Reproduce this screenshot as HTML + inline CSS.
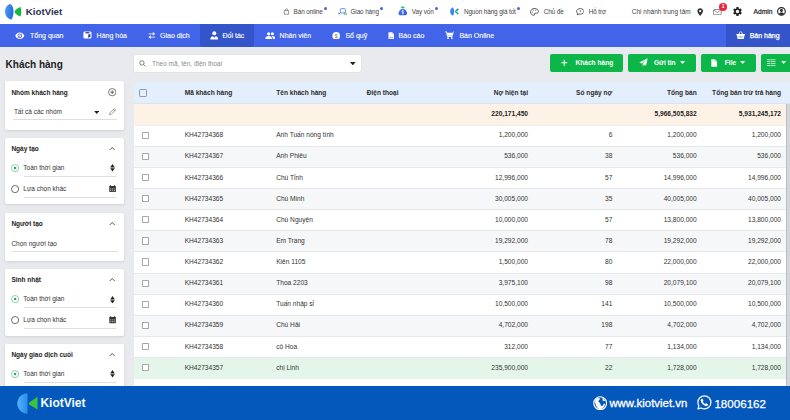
<!DOCTYPE html>
<html><head><meta charset="utf-8">
<style>
*{margin:0;padding:0;box-sizing:border-box}
html,body{width:790px;height:420px;overflow:hidden;background:#e9eaee;font-family:"Liberation Sans",sans-serif;color:#222}
.abs,.bx,.t{position:absolute}
.t{white-space:nowrap}
.r{text-align:right}
.th{font-size:6.6px;font-weight:bold;color:#2b2b2b}
.tb{font-size:6.6px;font-weight:bold;color:#222}
.td{font-size:6.6px;color:#333}
.cb{position:absolute;width:7.4px;height:7.2px;border:0.9px solid #8e939b;border-radius:1.2px;background:transparent}
#top{position:absolute;left:0;top:0;width:790px;height:24px;background:#fff}
#nav{position:absolute;left:0;top:24px;width:790px;height:22.5px;background:#4264e8}
.nt{position:absolute;top:0.8px;height:22.5px;line-height:22.5px;color:#fff;font-size:7px;white-space:nowrap;-webkit-text-stroke:0.12px #fff}
.tt{position:absolute;top:1px;height:24px;line-height:22.6px;font-size:6.4px;letter-spacing:-0.12px;color:#444;white-space:nowrap}
.dot{position:absolute;width:3px;height:3px;border-radius:50%;background:#4a62e0}
.panel{position:absolute;left:5px;width:118.5px;background:#fff;border-radius:2px;box-shadow:0 1px 3px rgba(0,0,0,.11)}
.ph{position:absolute;left:11.4px;font-size:6.5px;font-weight:bold;color:#222;white-space:nowrap}
.pt{position:absolute;font-size:6.5px;color:#333;white-space:nowrap}
.ul{position:absolute;height:0.7px;background:#dedede}
.radio{position:absolute;width:8px;height:8px;border-radius:50%;border:0.8px solid #555}
.radio.on{border-color:#1fae5a}
.radio.on:after{content:"";position:absolute;left:2.2px;top:2.2px;width:2.4px;height:2.4px;border-radius:50%;background:#1fae5a}
.chev{position:absolute;width:4px;height:4px;border-left:0.9px solid #333;border-top:0.9px solid #333;transform:rotate(45deg)}
.btn{position:absolute;top:54.1px;height:17.6px;background:#0db649;border-radius:2px;color:#fff;font-size:6.6px;font-weight:bold}
.btn span{position:absolute;top:0;line-height:17.6px;white-space:nowrap}
#foot{position:absolute;left:0;top:386.3px;width:790px;height:34px;background:#0558bb}

</style></head><body>
<div id="top">
  <svg class="abs" style="left:4px;top:3px" width="18" height="17" viewBox="0 0 18 17">
    <defs><linearGradient id="lg1" x1="0" y1="0" x2="1" y2="0.3"><stop offset="0" stop-color="#4aa2f6"/><stop offset="1" stop-color="#2a6ce0"/></linearGradient></defs>
    <path d="M6.5 1 C3 1.5 1 5 1 8.5 C1 12.5 3.5 16 7.5 16.5 C9 14 9.5 11 9.5 8.5 C9.5 5.5 8.8 2.8 6.5 1 Z" fill="url(#lg1)"/>
    <path d="M16.6 3.9 C13.8 5 11.8 6.3 11 7.4 C10.5 8.2 10.5 9.2 11 10 C11.8 11.1 13.8 12.5 16.4 13.6 C17 11.5 17.3 10 17.3 8.7 C17.3 7.2 17.1 5.6 16.6 3.9 Z" fill="#14ba3c"/>
  </svg>
  <div class="abs" style="left:25.8px;top:3.8px;height:16px;line-height:16px;font-size:9.7px;font-weight:bold;color:#2a3255">KiotViet</div>

  <!-- bag -->
  <svg class="abs" style="left:282.5px;top:7.9px" width="7" height="7" viewBox="0 0 14 14" fill="none" stroke="#777" stroke-width="1.5">
    <path d="M2.5 5.2 H11.5 L11 12.5 H3 Z" stroke-linejoin="round"/><path d="M4.8 5.2 V3.8 A2.2 2.2 0 0 1 9.2 3.8 V5.2"/>
  </svg>
  <div class="tt" style="left:293.6px">Bán online</div><div class="dot" style="left:323.7px;top:6.7px"></div>
  <!-- truck -->
  <svg class="abs" style="left:337.5px;top:7.7px" width="9.2" height="7.4" viewBox="0 0 18 14" fill="none">
    <rect x="4.5" y="1" width="10" height="8.5" rx="2" stroke="#3f6fe0" stroke-width="1.5"/>
    <path d="M1 8 L4.5 10.5 L1 13 Z" fill="#3f6fe0"/>
    <circle cx="14.5" cy="11.2" r="2.2" fill="#fff" stroke="#2fae5a" stroke-width="1.6"/>
  </svg>
  <div class="tt" style="left:350.5px">Giao hàng</div><div class="dot" style="left:379.9px;top:6.7px"></div>
  <!-- money bag -->
  <svg class="abs" style="left:397.6px;top:6.4px" width="9.5" height="9.7" viewBox="0 0 20 20">
    <defs><linearGradient id="mb" x1="0" y1="0" x2="1" y2="1"><stop offset="0" stop-color="#3a7ef0"/><stop offset="1" stop-color="#3358dc"/></linearGradient></defs>
    <ellipse cx="10" cy="2.2" rx="4.4" ry="1.6" fill="#22b055"/>
    <rect x="8.2" y="3.4" width="3.6" height="3" fill="#a8e6bf"/>
    <path d="M7.5 6 C3.5 8 1 11.5 1 15.5 C1 18 2.8 19.2 5 19.2 H15 C17.2 19.2 19 18 19 15.5 C19 11.5 16.5 8 12.5 6 Z" fill="url(#mb)"/>
    <path d="M12 10 C11.5 9.4 10.8 9.2 10 9.2 C8.9 9.2 8.1 9.8 8.1 10.8 C8.1 12.8 12 12.4 12 14.4 C12 15.4 11.2 16 10 16 C9.2 16 8.5 15.7 8 15.2 M10 8 V17.2" fill="none" stroke="#fff" stroke-width="1.3"/>
  </svg>
  <div class="tt" style="left:411.8px">Vay vốn</div><div class="dot" style="left:434.8px;top:6.7px"></div>
  <!-- C logo -->
  <svg class="abs" style="left:450.1px;top:7.2px" width="8.6" height="8.8" viewBox="0 0 17.5 18">
    <defs><linearGradient id="cg" x1="0" y1="0" x2="0" y2="1"><stop offset="0" stop-color="#2a62c8"/><stop offset="0.5" stop-color="#2bb0a0"/><stop offset="1" stop-color="#18b84a"/></linearGradient></defs>
    <path d="M6 0.3 C2.5 1.5 0.3 5 0.3 9 C0.3 13 2.5 16.5 6.2 17.7 C7.8 15 8.4 12 8.4 9 C8.4 6 7.7 3 6 0.3 Z" fill="#3a86ee"/>
    <path d="M16 5 L11.2 9.2 L16 13.4" fill="none" stroke="url(#cg)" stroke-width="3.2" stroke-linecap="round" stroke-linejoin="round"/>
  </svg>
  <div class="tt" style="left:463.9px">Nguồn hàng giá tốt</div><div class="dot" style="left:516.9px;top:6.7px"></div>
  <!-- palette -->
  <svg class="abs" style="left:530.1px;top:7.8px" width="9" height="7.8" viewBox="0 0 18 16" fill="none" stroke="#3a3a3a" stroke-width="1.7">
    <path d="M9 1 C4.5 1 1 4 1 8 C1 12 4 15 7.5 15 C9 15 9.3 14 8.8 13 C8.3 12 8.8 10.8 10.2 10.8 H13 C15.5 10.8 17 9.2 17 7 C17 3.5 13.5 1 9 1 Z"/>
    <circle cx="5" cy="8" r="1" fill="#3a3a3a" stroke="none"/><circle cx="7" cy="4.5" r="1" fill="#3a3a3a" stroke="none"/><circle cx="11.5" cy="4.5" r="1" fill="#3a3a3a" stroke="none"/>
  </svg>
  <div class="tt" style="left:543.7px">Chủ đề</div>
  <!-- chat -->
  <svg class="abs" style="left:575.5px;top:8.3px" width="8.6" height="7.4" viewBox="0 0 18 15" fill="none" stroke="#3a3a3a" stroke-width="1.7">
    <path d="M9 1 C4.6 1 1.2 3.6 1.2 6.8 C1.2 8.4 2 9.8 3.3 10.8 L2.5 14 L6.2 12.3 C7.1 12.5 8 12.6 9 12.6 C13.4 12.6 16.8 10 16.8 6.8 C16.8 3.6 13.4 1 9 1 Z" stroke-linejoin="round"/>
    <path d="M9 4.5 V8" />
  </svg>
  <div class="tt" style="left:588.7px">Hỗ trợ</div>
  <div class="tt" style="left:631.8px;font-size:6.5px;letter-spacing:0">Chi nhánh trung tâm</div>
  <!-- pin -->
  <svg class="abs" style="left:696.9px;top:7.7px" width="6.4" height="8.2" viewBox="0 0 12 16">
    <path d="M6 0.5 C2.8 0.5 0.5 2.9 0.5 6 C0.5 10 6 15.5 6 15.5 C6 15.5 11.5 10 11.5 6 C11.5 2.9 9.2 0.5 6 0.5 Z M6 3.8 A2.2 2.2 0 1 1 6 8.2 A2.2 2.2 0 1 1 6 3.8 Z" fill="#333" fill-rule="evenodd"/>
  </svg>
  <!-- mail -->
  <svg class="abs" style="left:713px;top:9px" width="8.8" height="6.2" viewBox="0 0 18 13" fill="none" stroke="#666" stroke-width="1.5">
    <rect x="1" y="1" width="16" height="11" rx="1.5"/><path d="M1.5 2 L9 7.5 L16.5 2"/>
  </svg>
  <div class="abs" style="left:719.3px;top:3.2px;width:7.6px;height:7.4px;border-radius:50%;background:#e8283a;color:#fff;font-size:5px;font-weight:bold;line-height:7.4px;text-align:center">1</div>
  <!-- gear -->
  <svg class="abs" style="left:732.6px;top:7.1px" width="9" height="9" viewBox="2.2 2.2 19.6 19.6">
    <path fill="#222" d="M19.14 12.94c.04-.3.06-.61.06-.94 0-.32-.02-.64-.07-.94l2.03-1.58a.49.49 0 0 0 .12-.61l-1.92-3.32a.488.488 0 0 0-.59-.22l-2.39.96c-.5-.38-1.03-.7-1.62-.94l-.36-2.54a.484.484 0 0 0-.48-.41h-3.84c-.24 0-.43.17-.47.41l-.36 2.54c-.59.24-1.13.57-1.62.94l-2.39-.96c-.22-.08-.47 0-.59.22L2.74 8.87c-.12.21-.08.47.12.61l2.03 1.58c-.05.3-.09.63-.09.94s.02.64.07.94l-2.03 1.58a.49.49 0 0 0-.12.61l1.92 3.32c.12.22.37.29.59.22l2.39-.96c.5.38 1.03.7 1.62.94l.36 2.54c.05.24.24.41.48.41h3.84c.24 0 .44-.17.47-.41l.36-2.54c.59-.24 1.13-.56 1.62-.94l2.39.96c.22.08.47 0 .59-.22l1.92-3.32c.12-.22.07-.47-.12-.61l-2.01-1.58zM12 15.6c-1.98 0-3.6-1.62-3.6-3.6s1.62-3.6 3.6-3.6 3.6 1.62 3.6 3.6-1.62 3.6-3.6 3.6z"/>
  </svg>
  <div class="tt" style="left:753.6px;font-size:6.7px;color:#222;-webkit-text-stroke:0.2px #222;letter-spacing:0">Admin</div>
  <!-- user circle -->
  <svg class="abs" style="left:776.9px;top:7.4px" width="8.9" height="8.9" viewBox="0 0 20 20">
    <circle cx="10" cy="10" r="8.6" fill="#fff" stroke="#262626" stroke-width="2.6"/>
    <circle cx="10" cy="8" r="3.3" fill="#262626"/>
    <path d="M4.2 15.8 C5.3 13.3 7.4 12.4 10 12.4 C12.6 12.4 14.7 13.3 15.8 15.8 C14.3 17.2 12.3 18 10 18 C7.7 18 5.7 17.2 4.2 15.8 Z" fill="#262626"/>
  </svg>
</div>

<div id="nav">
  <div class="abs" style="left:200.2px;top:0;width:53.5px;height:22.5px;background:#3454ca;border-radius:0 0 2px 2px"></div>
  <div class="abs" style="left:726.1px;top:0;width:64px;height:22.5px;background:#3454ca"></div>
  <!-- eye -->
  <svg class="abs" style="left:15px;top:7.7px" width="9.6" height="7.4" viewBox="0 0 20 15">
    <path d="M10 0.8 C5.5 0.8 1.8 4.2 0.6 7.5 C1.8 10.8 5.5 14.2 10 14.2 C14.5 14.2 18.2 10.8 19.4 7.5 C18.2 4.2 14.5 0.8 10 0.8 Z" fill="#fff"/>
    <circle cx="10" cy="7.5" r="4.6" fill="#3a4fc0"/><circle cx="10" cy="7.5" r="3.1" fill="#fff"/>
    <path d="M11.6 4.8 L8.6 10" stroke="#3a4fc0" stroke-width="1.1"/>
  </svg>
  <div class="nt" style="left:30px">Tổng quan</div>
  <!-- cube -->
  <svg class="abs" style="left:83.2px;top:7.2px" width="8.9" height="8" viewBox="0 0 18 16">
    <path d="M4 0.8 H14 C16 0.8 17.2 2 17.2 4 V12 C17.2 14 16 15.2 14 15.2 H4 C2 15.2 0.8 14 0.8 12 V4 C0.8 2 2 0.8 4 0.8 Z" fill="#fff"/>
    <ellipse cx="9" cy="3.6" rx="5" ry="1.6" fill="#34449a"/>
    <path d="M10.5 7 L15 5.8 V12 L10.5 13.6 Z" fill="#34449a"/>
  </svg>
  <div class="nt" style="left:96.6px">Hàng hóa</div>
  <!-- arrows -->
  <svg class="abs" style="left:147.5px;top:8.1px" width="7.6" height="7" viewBox="0 0 14 13">
    <path d="M1 2.6 H9 V4.4 H1 Z M9 0 L13.2 3.5 L9 7 Z" fill="#fff"/>
    <path d="M13 8.6 H5 V10.4 H13 Z M5 6 L0.8 9.5 L5 13 Z" fill="#fff"/>
  </svg>
  <div class="nt" style="left:160.1px">Giao dịch</div>
  <!-- person -->
  <svg class="abs" style="left:209.6px;top:7px" width="8.6" height="8.6" viewBox="0 0 16 16">
    <circle cx="8" cy="4.2" r="3.7" fill="#fff"/>
    <path d="M0.6 15.8 C0.6 12 2.5 9.8 5.6 9.6 L8 12.5 L10.4 9.6 C13.5 9.8 15.4 12 15.4 15.8 Z" fill="#fff"/>
  </svg>
  <div class="nt" style="left:222.5px">Đối tác</div>
  <!-- people -->
  <svg class="abs" style="left:264.6px;top:8.1px" width="10.8" height="7" viewBox="0 0 22 14">
    <circle cx="7.5" cy="3.6" r="3.3" fill="#fff"/><circle cx="15" cy="3.6" r="3.1" fill="#fff"/>
    <path d="M0.5 14 C0.5 10 3 8 7.5 8 C12 8 14.5 10 14.5 14 Z" fill="#fff"/>
    <path d="M13.5 8.2 C14.2 8 14.6 8 15.2 8 C19 8 21.5 10 21.5 14 H16 C16 11.5 15.2 9.5 13.5 8.2 Z" fill="#fff"/>
  </svg>
  <div class="nt" style="left:279.6px">Nhân viên</div>
  <!-- dollar -->
  <svg class="abs" style="left:332px;top:7.5px" width="8.4" height="7.9" viewBox="0 0 16 16">
    <ellipse cx="8" cy="8" rx="7.8" ry="7.8" fill="#fff"/>
    <text x="8" y="11.6" font-size="10" font-weight="bold" fill="#8088b8" text-anchor="middle" font-family="Liberation Sans">$</text>
  </svg>
  <div class="nt" style="left:345.4px">Sổ quỹ</div>
  <!-- doc -->
  <svg class="abs" style="left:387.6px;top:7.6px" width="6.7" height="7.9" viewBox="0 0 12 15">
    <path d="M0.5 1.2 C0.5 0.8 0.8 0.5 1.2 0.5 H7.5 L11.5 4.5 V13.8 C11.5 14.2 11.2 14.5 10.8 14.5 H1.2 C0.8 14.5 0.5 14.2 0.5 13.8 Z" fill="#fff"/>
    <path d="M7.5 0.5 V4.5 H11.5" fill="#c8d3f8"/>
    <path d="M3 12 V9.5 M5 12 V8 M7 12 V10 M9 12 V8.5" stroke="#4264e8" stroke-width="0.9"/>
  </svg>
  <div class="nt" style="left:398.6px">Báo cáo</div>
  <!-- cart -->
  <svg class="abs" style="left:444.8px;top:7px" width="8.8" height="8.4" viewBox="0 0 17 16">
    <path d="M0.5 1.5 H3 L4.8 10.5 H14.5" fill="none" stroke="#fff" stroke-width="1.8"/>
    <path d="M3.6 3.5 H16.5 L14.8 9 H4.6 Z" fill="#fff"/>
    <path d="M16.5 1 L15.5 3.6" stroke="#fff" stroke-width="1.5"/>
    <circle cx="5.8" cy="13.8" r="1.7" fill="#fff"/><circle cx="13.2" cy="13.8" r="1.7" fill="#fff"/>
  </svg>
  <div class="nt" style="left:459.4px">Bán Online</div>
  <!-- basket -->
  <svg class="abs" style="left:735.6px;top:7px" width="9.4" height="8.4" viewBox="0 0 18 16">
    <path d="M5.5 6 L8 1 M12.5 6 L10 1" stroke="#fff" stroke-width="1.6" fill="none"/>
    <path d="M0.5 5.5 H17.5 V7.5 H16.5 L15 14.8 C14.9 15.3 14.5 15.5 14 15.5 H4 C3.5 15.5 3.1 15.3 3 14.8 L1.5 7.5 H0.5 Z" fill="#fff"/>
    <path d="M6 9.5 V12.5 M9 9.5 V12.5 M12 9.5 V12.5" stroke="#3454ca" stroke-width="1.2"/>
  </svg>
  <div class="nt" style="left:749.7px;-webkit-text-stroke:0.25px #fff">Bán hàng</div>
</div>

<div class="abs" style="left:5.6px;top:57.5px;font-size:10px;font-weight:bold;color:#222;line-height:14px">Khách hàng</div>

<div class="abs" style="left:133.8px;top:54.5px;width:227.3px;height:17.8px;background:#fff;border-radius:2px;box-shadow:0 0 0 0.6px #dcdde2"></div>
<svg class="abs" style="left:139.3px;top:59.8px" width="6.8" height="6.8" viewBox="0 0 14 14" fill="none" stroke="#555" stroke-width="1.5">
  <circle cx="6" cy="6" r="4.5"/><path d="M9.3 9.3 L13 13"/>
</svg>
<div class="abs" style="left:152px;top:54.5px;line-height:17.8px;font-size:6.5px;color:#8a8a8a">Theo mã, tên, điện thoại</div>
<svg class="abs" style="left:350px;top:62px" width="5.6" height="3.4" viewBox="0 0 10 6"><path d="M0 0 H10 L5 6 Z" fill="#222"/></svg>

<div class="btn" style="left:550.1px;width:72.9px">
  <svg class="abs" style="left:11.3px;top:4.6px" width="6.6" height="7.4" viewBox="0 0 12 12" stroke="#fff" stroke-width="2"><path d="M6 0.5 V11.5 M0.5 6 H11.5"/></svg>
  <span style="left:25.4px">Khách hàng</span></div>
<div class="btn" style="left:628.1px;width:67.8px">
  <svg class="abs" style="left:10.8px;top:3.8px" width="9" height="8.8" viewBox="0 0 16 16">
    <path d="M15.6 0.4 L0.4 8 L4.8 9.8 L12.6 3.4 L6.6 10.6 L6.6 15.6 L9.3 12.2 L12.6 14.2 Z" fill="#fff"/>
  </svg>
  <span style="left:25.9px">Gửi tin</span>
  <svg class="abs" style="left:52.1px;top:7px" width="5.2" height="3" viewBox="0 0 10 6"><path d="M0 0 H10 L5 6 Z" fill="#fff"/></svg>
</div>
<div class="btn" style="left:701.1px;width:54.7px">
  <svg class="abs" style="left:10.3px;top:4.6px" width="6.4" height="7.9" viewBox="0 0 12 15">
    <path d="M0.5 1 C0.5 0.7 0.7 0.5 1 0.5 H7.5 L11.5 4.5 V14 C11.5 14.3 11.3 14.5 11 14.5 H1 C0.7 14.5 0.5 14.3 0.5 14 Z" fill="#fff"/>
    <path d="M7.5 0.5 V4.5 H11.5" fill="none" stroke="#0db649" stroke-width="0.7"/>
  </svg>
  <span style="left:23.7px">File</span>
  <svg class="abs" style="left:39px;top:7px" width="5.4" height="3" viewBox="0 0 10 6"><path d="M0 0 H10 L5 6 Z" fill="#fff"/></svg>
</div>
<div class="btn" style="left:761.1px;width:35px">
  <svg class="abs" style="left:6.4px;top:5.2px" width="8.6" height="7.4" viewBox="0 0 16 14" fill="none" stroke="#fff" stroke-width="1.3">
    <path d="M0 1.5 H16 M0 5 H16 M0 8.7 H16 M0 12.4 H16"/><path d="M6.5 1.5 V12.4" stroke="#0db649" stroke-width="1"/>
  </svg>
  <svg class="abs" style="left:20.3px;top:7px" width="5.4" height="3" viewBox="0 0 10 6"><path d="M0 0 H10 L5 6 Z" fill="#fff"/></svg>
</div>
<div class="panel" style="top:81.2px;height:48.5px"></div>
<div class="ph" style="top:88.6px;line-height:8px">Nhóm khách hàng</div>
<svg class="abs" style="left:107.6px;top:88.4px" width="8.4" height="8.4" viewBox="0 0 16 16" fill="none" stroke="#333" stroke-width="1.2"><circle cx="8" cy="8" r="7"/><path d="M8 4.5 V11.5 M4.5 8 H11.5" stroke-width="1.4"/></svg>
<div class="pt" style="left:13.9px;top:107.7px;line-height:8px">Tất cả các nhóm</div>
<svg class="abs" style="left:94px;top:111.1px" width="5.4" height="3" viewBox="0 0 10 6"><path d="M0 0 H10 L5 6 Z" fill="#222"/></svg>
<svg class="abs" style="left:108.6px;top:108.3px" width="7.2" height="7.2" viewBox="0 0 14 14" fill="none" stroke="#555" stroke-width="1.1"><path d="M10 1.2 L12.8 4 L4.5 12.3 L1.2 12.8 L1.7 9.5 Z M8.5 2.7 L11.3 5.5"/></svg>
<div class="ul" style="left:13.3px;top:118.6px;width:103.7px"></div>
<div class="panel" style="top:138.1px;height:66.4px"></div>
<div class="ph" style="top:145.0px;line-height:8px">Ngày tạo</div>
<svg class="abs" style="left:108.5px;top:147.2px" width="6.4" height="3.6" viewBox="0 0 12 7" fill="none" stroke="#222" stroke-width="1.5"><path d="M1 6 L6 1 L11 6"/></svg>
<svg class="abs" style="left:11.2px;top:163.6px" width="8.2" height="8.2" viewBox="0 0 16 16"><circle cx="8" cy="8" r="7" fill="#fff" stroke="#4cbf86" stroke-width="1.3"/><circle cx="8" cy="8" r="2.5" fill="#3a9a6a"/></svg>
<div class="pt" style="left:23.3px;top:163.7px;line-height:8px">Toàn thời gian</div>
<svg class="abs" style="left:109.6px;top:164.0px" width="5" height="7.6" viewBox="0 0 8 13"><path d="M4 0 L8 5.8 H0 Z M0 7.2 H8 L4 13 Z" fill="#222"/></svg>
<div class="ul" style="left:23.8px;top:176.0px;width:91.9px"></div>
<svg class="abs" style="left:11.2px;top:185.0px" width="8.2" height="8.2" viewBox="0 0 16 16"><circle cx="8" cy="8" r="7" fill="#fff" stroke="#444" stroke-width="1.5"/></svg>
<div class="pt" style="left:23.3px;top:185.0px;line-height:8px">Lựa chọn khác</div>
<svg class="abs" style="left:109.1px;top:184.7px" width="7.2" height="7.6" viewBox="0 0 14 15"><path d="M3 0 V2.5 M11 0 V2.5" stroke="#333" stroke-width="1.6"/><rect x="0.5" y="1.8" width="13" height="12.7" rx="1.2" fill="#333"/><path d="M2 6.5 h2.6 v2.4 h-2.6 z M5.7 6.5 h2.6 v2.4 h-2.6 z M9.4 6.5 h2.6 v2.4 h-2.6 z M2 10 h2.6 v2.4 h-2.6 z M5.7 10 h2.6 v2.4 h-2.6 z M9.4 10 h2.6 v2.4 h-2.6 z" fill="#9a9a9a"/></svg>
<div class="ul" style="left:23.8px;top:197.0px;width:91.9px"></div>
<div class="panel" style="top:213.1px;height:47.7px"></div>
<div class="ph" style="top:220.0px;line-height:8px">Người tạo</div>
<svg class="abs" style="left:108.5px;top:222.2px" width="6.4" height="3.6" viewBox="0 0 12 7" fill="none" stroke="#222" stroke-width="1.5"><path d="M1 6 L6 1 L11 6"/></svg>
<div class="pt" style="left:11.4px;top:239.6px;line-height:8px">Chọn người tạo</div>
<div class="ul" style="left:11.8px;top:250.5px;width:105.8px"></div>
<div class="panel" style="top:268.8px;height:67.1px"></div>
<div class="ph" style="top:276.3px;line-height:8px">Sinh nhật</div>
<svg class="abs" style="left:108.5px;top:278.4px" width="6.4" height="3.6" viewBox="0 0 12 7" fill="none" stroke="#222" stroke-width="1.5"><path d="M1 6 L6 1 L11 6"/></svg>
<svg class="abs" style="left:11.2px;top:295.2px" width="8.2" height="8.2" viewBox="0 0 16 16"><circle cx="8" cy="8" r="7" fill="#fff" stroke="#4cbf86" stroke-width="1.3"/><circle cx="8" cy="8" r="2.5" fill="#3a9a6a"/></svg>
<div class="pt" style="left:23.3px;top:295.3px;line-height:8px">Toàn thời gian</div>
<svg class="abs" style="left:109.6px;top:295.6px" width="5" height="7.6" viewBox="0 0 8 13"><path d="M4 0 L8 5.8 H0 Z M0 7.2 H8 L4 13 Z" fill="#222"/></svg>
<div class="ul" style="left:23.8px;top:307.0px;width:91.9px"></div>
<svg class="abs" style="left:11.2px;top:316.2px" width="8.2" height="8.2" viewBox="0 0 16 16"><circle cx="8" cy="8" r="7" fill="#fff" stroke="#444" stroke-width="1.5"/></svg>
<div class="pt" style="left:23.3px;top:316.3px;line-height:8px">Lựa chọn khác</div>
<svg class="abs" style="left:109.1px;top:316.0px" width="7.2" height="7.6" viewBox="0 0 14 15"><path d="M3 0 V2.5 M11 0 V2.5" stroke="#333" stroke-width="1.6"/><rect x="0.5" y="1.8" width="13" height="12.7" rx="1.2" fill="#333"/><path d="M2 6.5 h2.6 v2.4 h-2.6 z M5.7 6.5 h2.6 v2.4 h-2.6 z M9.4 6.5 h2.6 v2.4 h-2.6 z M2 10 h2.6 v2.4 h-2.6 z M5.7 10 h2.6 v2.4 h-2.6 z M9.4 10 h2.6 v2.4 h-2.6 z" fill="#9a9a9a"/></svg>
<div class="ul" style="left:23.8px;top:327.7px;width:91.9px"></div>
<div class="panel" style="top:344.1px;height:60.0px"></div>
<div class="ph" style="top:351.2px;line-height:8px">Ngày giao dịch cuối</div>
<svg class="abs" style="left:108.5px;top:353.4px" width="6.4" height="3.6" viewBox="0 0 12 7" fill="none" stroke="#222" stroke-width="1.5"><path d="M1 6 L6 1 L11 6"/></svg>
<svg class="abs" style="left:11.2px;top:369.8px" width="8.2" height="8.2" viewBox="0 0 16 16"><circle cx="8" cy="8" r="7" fill="#fff" stroke="#4cbf86" stroke-width="1.3"/><circle cx="8" cy="8" r="2.5" fill="#3a9a6a"/></svg>
<div class="pt" style="left:23.3px;top:369.9px;line-height:8px">Toàn thời gian</div>
<svg class="abs" style="left:109.6px;top:370.2px" width="5" height="7.6" viewBox="0 0 8 13"><path d="M4 0 L8 5.8 H0 Z M0 7.2 H8 L4 13 Z" fill="#222"/></svg>
<div class="ul" style="left:23.8px;top:382.4px;width:91.9px"></div>
<div class="bx" style="left:133.60px;top:82.20px;width:656.40px;height:21.40px;background:#e4effd;border-bottom:0.7px solid #dbe3ee"></div>
<div class="cb" style="left:139.1px;top:89.2px;width:7.8px;height:7.6px;border-color:#969ba4"></div>
<div class="t th" style="left:184.70px;top:82.20px;height:21.40px;line-height:21.40px;">Mã khách hàng</div>
<div class="t th" style="left:276.20px;top:82.20px;height:21.40px;line-height:21.40px;">Tên khách hàng</div>
<div class="t th" style="left:366.70px;top:82.20px;height:21.40px;line-height:21.40px;">Điện thoại</div>
<div class="t r th" style="right:262.00px;top:82.20px;height:21.40px;line-height:21.40px;">Nợ hiện tại</div>
<div class="t r th" style="right:177.70px;top:82.20px;height:21.40px;line-height:21.40px;">Số ngày nợ</div>
<div class="t r th" style="right:93.30px;top:82.20px;height:21.40px;line-height:21.40px;">Tổng bán</div>
<div class="t r th" style="right:9.00px;top:82.20px;height:21.40px;line-height:21.40px;">Tổng bán trừ trả hàng</div>
<div class="bx" style="left:133.60px;top:103.60px;width:656.40px;height:21.40px;background:#fef2e7"></div>
<div class="t r tb" style="right:262.00px;top:102.60px;height:21.40px;line-height:21.40px;">220,171,450</div>
<div class="t r tb" style="right:93.30px;top:102.60px;height:21.40px;line-height:21.40px;">5,966,505,832</div>
<div class="t r tb" style="right:9.00px;top:102.60px;height:21.40px;line-height:21.40px;">5,931,245,172</div>
<div class="bx" style="left:133.60px;top:124.65px;width:656.40px;height:21.48px;background:#ffffff;border-top:0.7px solid #f3f1ef"></div>
<div class="cb" style="left:142.1px;top:131.70px;background:#fff;border-color:#a8a8a8;border-radius:0.8px"></div>
<div class="t td" style="left:184.70px;top:124.30px;height:21.13px;line-height:21.13px;">KH42734368</div>
<div class="t td" style="left:276.20px;top:124.30px;height:21.13px;line-height:21.13px;">Anh Tuấn nóng tính</div>
<div class="t r td" style="right:262.00px;top:124.30px;height:21.13px;line-height:21.13px;">1,200,000</div>
<div class="t r td" style="right:177.70px;top:124.30px;height:21.13px;line-height:21.13px;">6</div>
<div class="t r td" style="right:93.30px;top:124.30px;height:21.13px;line-height:21.13px;">1,200,000</div>
<div class="t r td" style="right:9.00px;top:124.30px;height:21.13px;line-height:21.13px;">1,200,000</div>
<div class="bx" style="left:133.60px;top:145.78px;width:656.40px;height:21.48px;background:#f6f7f9;border-top:0.6px solid #e7e8eb"></div>
<div class="cb" style="left:142.1px;top:152.83px;background:#fff;border-color:#a8a8a8;border-radius:0.8px"></div>
<div class="t td" style="left:184.70px;top:145.43px;height:21.13px;line-height:21.13px;">KH42734367</div>
<div class="t td" style="left:276.20px;top:145.43px;height:21.13px;line-height:21.13px;">Anh Phiêu</div>
<div class="t r td" style="right:262.00px;top:145.43px;height:21.13px;line-height:21.13px;">536,000</div>
<div class="t r td" style="right:177.70px;top:145.43px;height:21.13px;line-height:21.13px;">38</div>
<div class="t r td" style="right:93.30px;top:145.43px;height:21.13px;line-height:21.13px;">536,000</div>
<div class="t r td" style="right:9.00px;top:145.43px;height:21.13px;line-height:21.13px;">536,000</div>
<div class="bx" style="left:133.60px;top:166.91px;width:656.40px;height:21.48px;background:#ffffff;border-top:0.6px solid #e7e8eb"></div>
<div class="cb" style="left:142.1px;top:173.96px;background:#fff;border-color:#a8a8a8;border-radius:0.8px"></div>
<div class="t td" style="left:184.70px;top:166.56px;height:21.13px;line-height:21.13px;">KH42734366</div>
<div class="t td" style="left:276.20px;top:166.56px;height:21.13px;line-height:21.13px;">Chú Tỉnh</div>
<div class="t r td" style="right:262.00px;top:166.56px;height:21.13px;line-height:21.13px;">12,996,000</div>
<div class="t r td" style="right:177.70px;top:166.56px;height:21.13px;line-height:21.13px;">57</div>
<div class="t r td" style="right:93.30px;top:166.56px;height:21.13px;line-height:21.13px;">14,996,000</div>
<div class="t r td" style="right:9.00px;top:166.56px;height:21.13px;line-height:21.13px;">14,996,000</div>
<div class="bx" style="left:133.60px;top:188.04px;width:656.40px;height:21.48px;background:#f6f7f9;border-top:0.6px solid #e7e8eb"></div>
<div class="cb" style="left:142.1px;top:195.09px;background:#fff;border-color:#a8a8a8;border-radius:0.8px"></div>
<div class="t td" style="left:184.70px;top:187.69px;height:21.13px;line-height:21.13px;">KH42734365</div>
<div class="t td" style="left:276.20px;top:187.69px;height:21.13px;line-height:21.13px;">Chú Minh</div>
<div class="t r td" style="right:262.00px;top:187.69px;height:21.13px;line-height:21.13px;">30,005,000</div>
<div class="t r td" style="right:177.70px;top:187.69px;height:21.13px;line-height:21.13px;">35</div>
<div class="t r td" style="right:93.30px;top:187.69px;height:21.13px;line-height:21.13px;">40,005,000</div>
<div class="t r td" style="right:9.00px;top:187.69px;height:21.13px;line-height:21.13px;">40,005,000</div>
<div class="bx" style="left:133.60px;top:209.17px;width:656.40px;height:21.48px;background:#ffffff;border-top:0.6px solid #e7e8eb"></div>
<div class="cb" style="left:142.1px;top:216.22px;background:#fff;border-color:#a8a8a8;border-radius:0.8px"></div>
<div class="t td" style="left:184.70px;top:208.82px;height:21.13px;line-height:21.13px;">KH42734364</div>
<div class="t td" style="left:276.20px;top:208.82px;height:21.13px;line-height:21.13px;">Chú Nguyện</div>
<div class="t r td" style="right:262.00px;top:208.82px;height:21.13px;line-height:21.13px;">10,000,000</div>
<div class="t r td" style="right:177.70px;top:208.82px;height:21.13px;line-height:21.13px;">57</div>
<div class="t r td" style="right:93.30px;top:208.82px;height:21.13px;line-height:21.13px;">13,800,000</div>
<div class="t r td" style="right:9.00px;top:208.82px;height:21.13px;line-height:21.13px;">13,800,000</div>
<div class="bx" style="left:133.60px;top:230.30px;width:656.40px;height:21.48px;background:#f6f7f9;border-top:0.6px solid #e7e8eb"></div>
<div class="cb" style="left:142.1px;top:237.35px;background:#fff;border-color:#a8a8a8;border-radius:0.8px"></div>
<div class="t td" style="left:184.70px;top:229.95px;height:21.13px;line-height:21.13px;">KH42734363</div>
<div class="t td" style="left:276.20px;top:229.95px;height:21.13px;line-height:21.13px;">Em Trang</div>
<div class="t r td" style="right:262.00px;top:229.95px;height:21.13px;line-height:21.13px;">19,292,000</div>
<div class="t r td" style="right:177.70px;top:229.95px;height:21.13px;line-height:21.13px;">78</div>
<div class="t r td" style="right:93.30px;top:229.95px;height:21.13px;line-height:21.13px;">19,292,000</div>
<div class="t r td" style="right:9.00px;top:229.95px;height:21.13px;line-height:21.13px;">19,292,000</div>
<div class="bx" style="left:133.60px;top:251.43px;width:656.40px;height:21.48px;background:#ffffff;border-top:0.6px solid #e7e8eb"></div>
<div class="cb" style="left:142.1px;top:258.48px;background:#fff;border-color:#a8a8a8;border-radius:0.8px"></div>
<div class="t td" style="left:184.70px;top:251.08px;height:21.13px;line-height:21.13px;">KH42734362</div>
<div class="t td" style="left:276.20px;top:251.08px;height:21.13px;line-height:21.13px;">Kiên 1105</div>
<div class="t r td" style="right:262.00px;top:251.08px;height:21.13px;line-height:21.13px;">1,500,000</div>
<div class="t r td" style="right:177.70px;top:251.08px;height:21.13px;line-height:21.13px;">80</div>
<div class="t r td" style="right:93.30px;top:251.08px;height:21.13px;line-height:21.13px;">22,000,000</div>
<div class="t r td" style="right:9.00px;top:251.08px;height:21.13px;line-height:21.13px;">22,000,000</div>
<div class="bx" style="left:133.60px;top:272.56px;width:656.40px;height:21.48px;background:#f6f7f9;border-top:0.6px solid #e7e8eb"></div>
<div class="cb" style="left:142.1px;top:279.61px;background:#fff;border-color:#a8a8a8;border-radius:0.8px"></div>
<div class="t td" style="left:184.70px;top:272.21px;height:21.13px;line-height:21.13px;">KH42734361</div>
<div class="t td" style="left:276.20px;top:272.21px;height:21.13px;line-height:21.13px;">Thoa 2203</div>
<div class="t r td" style="right:262.00px;top:272.21px;height:21.13px;line-height:21.13px;">3,975,100</div>
<div class="t r td" style="right:177.70px;top:272.21px;height:21.13px;line-height:21.13px;">98</div>
<div class="t r td" style="right:93.30px;top:272.21px;height:21.13px;line-height:21.13px;">20,079,100</div>
<div class="t r td" style="right:9.00px;top:272.21px;height:21.13px;line-height:21.13px;">20,079,100</div>
<div class="bx" style="left:133.60px;top:293.69px;width:656.40px;height:21.48px;background:#ffffff;border-top:0.6px solid #e7e8eb"></div>
<div class="cb" style="left:142.1px;top:300.74px;background:#fff;border-color:#a8a8a8;border-radius:0.8px"></div>
<div class="t td" style="left:184.70px;top:293.34px;height:21.13px;line-height:21.13px;">KH42734360</div>
<div class="t td" style="left:276.20px;top:293.34px;height:21.13px;line-height:21.13px;">Tuấn nhập sỉ</div>
<div class="t r td" style="right:262.00px;top:293.34px;height:21.13px;line-height:21.13px;">10,500,000</div>
<div class="t r td" style="right:177.70px;top:293.34px;height:21.13px;line-height:21.13px;">141</div>
<div class="t r td" style="right:93.30px;top:293.34px;height:21.13px;line-height:21.13px;">10,500,000</div>
<div class="t r td" style="right:9.00px;top:293.34px;height:21.13px;line-height:21.13px;">10,500,000</div>
<div class="bx" style="left:133.60px;top:314.82px;width:656.40px;height:21.48px;background:#f6f7f9;border-top:0.6px solid #e7e8eb"></div>
<div class="cb" style="left:142.1px;top:321.87px;background:#fff;border-color:#a8a8a8;border-radius:0.8px"></div>
<div class="t td" style="left:184.70px;top:314.47px;height:21.13px;line-height:21.13px;">KH42734359</div>
<div class="t td" style="left:276.20px;top:314.47px;height:21.13px;line-height:21.13px;">Chú Hải</div>
<div class="t r td" style="right:262.00px;top:314.47px;height:21.13px;line-height:21.13px;">4,702,000</div>
<div class="t r td" style="right:177.70px;top:314.47px;height:21.13px;line-height:21.13px;">198</div>
<div class="t r td" style="right:93.30px;top:314.47px;height:21.13px;line-height:21.13px;">4,702,000</div>
<div class="t r td" style="right:9.00px;top:314.47px;height:21.13px;line-height:21.13px;">4,702,000</div>
<div class="bx" style="left:133.60px;top:335.95px;width:656.40px;height:21.48px;background:#ffffff;border-top:0.6px solid #e7e8eb"></div>
<div class="cb" style="left:142.1px;top:343.00px;background:#fff;border-color:#a8a8a8;border-radius:0.8px"></div>
<div class="t td" style="left:184.70px;top:335.60px;height:21.13px;line-height:21.13px;">KH42734358</div>
<div class="t td" style="left:276.20px;top:335.60px;height:21.13px;line-height:21.13px;">cô Hoa</div>
<div class="t r td" style="right:262.00px;top:335.60px;height:21.13px;line-height:21.13px;">312,000</div>
<div class="t r td" style="right:177.70px;top:335.60px;height:21.13px;line-height:21.13px;">77</div>
<div class="t r td" style="right:93.30px;top:335.60px;height:21.13px;line-height:21.13px;">1,134,000</div>
<div class="t r td" style="right:9.00px;top:335.60px;height:21.13px;line-height:21.13px;">1,134,000</div>
<div class="bx" style="left:133.60px;top:357.08px;width:656.40px;height:21.48px;background:#e3f6e9;border-top:0.6px solid #e7e8eb"></div>
<div class="cb" style="left:142.1px;top:364.13px;background:#fff;border-color:#a8a8a8;border-radius:0.8px"></div>
<div class="t td" style="left:184.70px;top:356.73px;height:21.13px;line-height:21.13px;">KH42734357</div>
<div class="t td" style="left:276.20px;top:356.73px;height:21.13px;line-height:21.13px;">chị Linh</div>
<div class="t r td" style="right:262.00px;top:356.73px;height:21.13px;line-height:21.13px;">235,900,000</div>
<div class="t r td" style="right:177.70px;top:356.73px;height:21.13px;line-height:21.13px;">22</div>
<div class="t r td" style="right:93.30px;top:356.73px;height:21.13px;line-height:21.13px;">1,728,000</div>
<div class="t r td" style="right:9.00px;top:356.73px;height:21.13px;line-height:21.13px;">1,728,000</div>
<div class="bx" style="left:133.60px;top:378.56px;width:656.40px;height:7.44px;background:#fff"></div>
<div class="bx" style="left:786.2px;top:103.60px;width:3.8px;height:282.40px;background:#d3d7de;border-left:1px solid #b8bcc3"></div><div id="foot">
  <svg class="abs" style="left:17.3px;top:6.3px" width="21" height="21" viewBox="0 0 21 21">
    <defs><linearGradient id="lg2" x1="0" y1="0" x2="1" y2="0"><stop offset="0" stop-color="#4fb4fa"/><stop offset="1" stop-color="#2b8cf0"/></linearGradient></defs>
    <path d="M10.5 0.3 C5 0.8 0.3 4.5 0.3 10.5 C0.3 16.5 5 20.3 10.5 20.7 L10.5 0.3 Z" fill="url(#lg2)"/>
    <path d="M20.5 3.8 L12.6 9.2 C11.6 9.9 11.6 11.1 12.6 11.8 L20.5 16.5 Z" fill="#3cc43e"/>
  </svg>
  <div class="abs" style="left:40.4px;top:0;line-height:34px;height:34px;font-size:12px;font-weight:bold;color:#f2faff">KiotViet</div>
  <!-- globe -->
  <svg class="abs" style="left:592.5px;top:9.8px" width="14.4" height="14.4" viewBox="0 0 20 20">
    <circle cx="10" cy="10" r="8.9" fill="none" stroke="#fff" stroke-width="1.6"/>
    <path d="M4 4.2 C5.5 3 7.5 2.5 9 3 C10 4 9.2 5.6 8 6.2 C7 7 7.6 8.6 9 9.2 C10.3 10 10 11.5 10.8 13 C11.5 14.3 12.8 14.5 13.6 13.2 C14.2 12 15 11 16.8 10.5 C16.8 12.5 16 14.5 14.5 16 C13 17.5 11 18.4 8.5 18.2 C6 17 4.5 14 3.5 11.5 C2.5 9 2.8 6 4 4.2 Z" fill="#fff"/>
    <path d="M12 2.3 C13.3 3.2 13.8 4.4 13.4 5.6 C13.1 6.6 14.3 7.1 15.3 6.8 C16.2 6.5 17 7.2 17.5 8 C17 5.4 14.8 3 12 2.3 Z" fill="#fff"/>
  </svg>
  <div class="abs" style="left:609.4px;top:-0.2px;line-height:34px;height:34px;font-size:11.4px;color:#fff;-webkit-text-stroke:0.3px #fff">www.kiotviet.vn</div>
  <!-- phone -->
  <svg class="abs" style="left:697.2px;top:9.2px" width="14.8" height="14.8" viewBox="0 0 20 20">
    <path d="M10 1.2 C5.1 1.2 1.2 5.1 1.2 10 C1.2 11.7 1.7 13.3 2.5 14.6 L1.3 18.7 L5.5 17.5 C6.8 18.3 8.4 18.8 10 18.8 C14.9 18.8 18.8 14.9 18.8 10 C18.8 5.1 14.9 1.2 10 1.2 Z" fill="none" stroke="#fff" stroke-width="1.6" stroke-linejoin="round"/>
    <path d="M6.2 5.2 C6.6 4.9 7.3 4.9 7.6 5.3 L8.6 7 C8.8 7.4 8.7 7.9 8.4 8.2 L7.8 8.7 C8.3 10 9.8 11.6 11.2 12.2 L11.8 11.6 C12.1 11.3 12.6 11.2 13 11.4 L14.7 12.4 C15.1 12.7 15.1 13.3 14.8 13.7 L14 14.5 C13.4 15.1 12.5 15.2 11.7 14.9 C9 13.8 6.2 11 5.1 8.3 C4.8 7.5 4.9 6.6 5.5 6 Z" fill="#fff"/>
  </svg>
  <div class="abs" style="left:714.4px;top:0.4px;line-height:34px;height:34px;font-size:11.6px;color:#fff;-webkit-text-stroke:0.25px #fff">18006162</div>
</div>
</body></html>
